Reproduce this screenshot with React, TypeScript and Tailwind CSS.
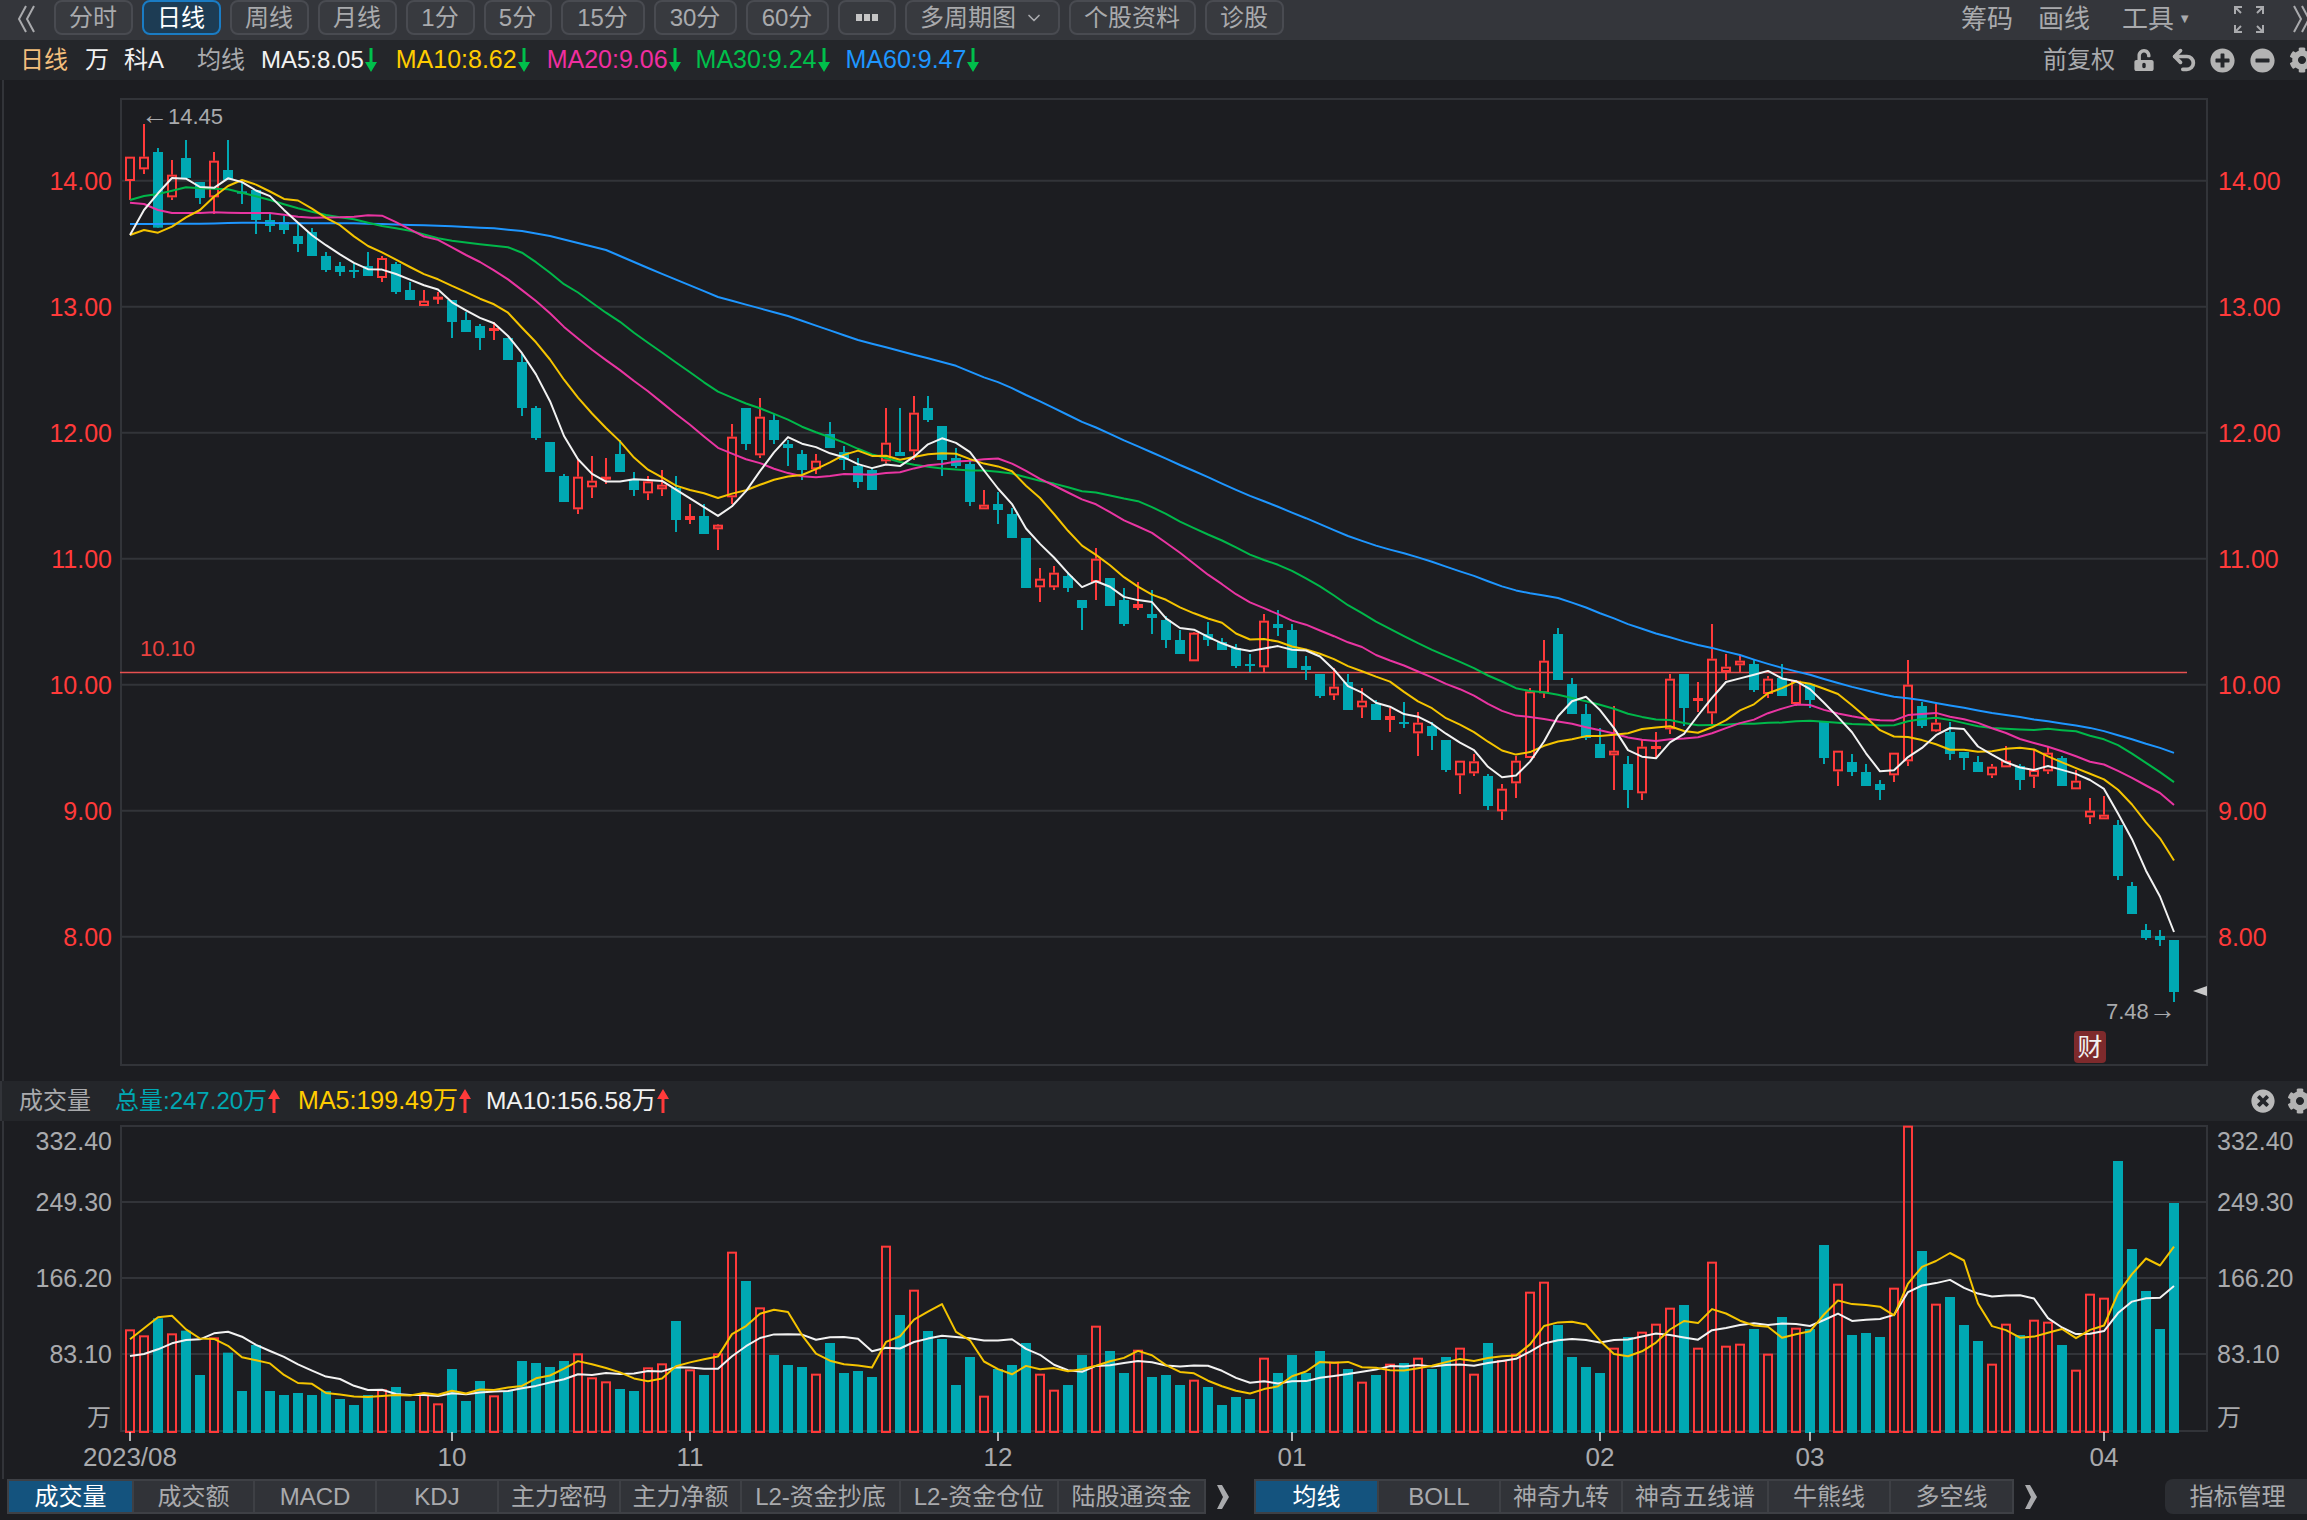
import { ChevronDown, Undo2 } from "lucide-react";
import { FaCog, FaMinusCircle, FaPlusCircle, FaTimesCircle, FaUnlockAlt } from "react-icons/fa";

const RED = "#ff3a3a";
const TEAL = "#00a8b3";
const GRID = "#323439";

type Candle = { up: boolean; wt: number; bt: number; bb: number; wb: number };

// rows are read as "r|g high bodyTop bodyBottom low", y = origin + value / 3
const seg = (origin: number, rows: string): Candle[] =>
  rows
    .trim()
    .split(/\s*;\s*/)
    .map((row) => {
      const [c, a, b, d, e] = row.split(" ");
      const y = (v: string) => origin + Number(v) / 3;
      return { up: c === "r", wt: y(a), bt: y(b), bb: y(d), wb: y(e) };
    });

const candles: Candle[] = [
  ...seg(100, `r 170 170 243 300;r 72 170 208 222;g 144 156 383 383;r 180 224 292 300;g 120 174 234 234;g 246 246 294 312;r 156 182 292 342;g 120 210 240 240;g 245 274 281 312;g 270 270 360 402;g 342 360 378 396;g 348 366 390 402;g 372 408 432 456;g 384 396 468 468;g 456 468 510 516;g 486 498 516 528;g 490 510 516 534;g 456 498 528 528;r 468 474 534 546;g 486 492 576 582;g 546 570 600 600;r 570 602 618 618;r 576 590 594 612;g 600 600 666 714;g 636 660 696 696;g 672 678 714 750;r 666 684 692 720;g 714 714 780 780;g 762 786 924 948`),
  ...seg(380, `g 78 84 174 180;g 186 186 276 276;g 282 288 366 366;r 240 290 388 402;r 228 302 322 354;r 234 290 294 312;g 180 222 276 276;g 276 300 330 348;r 288 304 340 360;r 270 314 328 348;g 288 324 420 456;r 372 408 420 432;g 372 408 462 462;r 432 434 448 510;r 132 170 352 372;g 84 84 192 210;r 54 110 226 234;g 102 120 180 192;g 180 192 204 258;g 210 222 270 300;r 222 242 268 282;g 126 162 204 204;g 198 216 240 270;g 234 258 306 324;g 264 270 330 330;r 84 188 244 250;g 84 216 228 228;r 48 98 214 240;g 48 84 120 126;g 138 138 240 288;g 204 234 258 264;g 240 252 366 378;r 330 374 388 388;g 336 372 390 432;g 384 402 474 474;g 474 474 624 624;r 564 596 622 666;r 558 578 622 630;g 576 588 624 636;g 660 660 684 750`),
  ...seg(520, `r 84 116 186 240;g 174 174 258 258;g 204 240 312 318;r 186 252 264 270;g 210 282 294 342;g 288 300 360 384;g 330 360 402 402;r 336 338 424 424;g 306 342 360 378;g 354 366 390 390;g 372 384 438 444;g 402 432 438 456;r 282 302 442 456;g 270 312 324 348;g 312 330 444 444;g 408 438 450 480;g 462 462 528 534;r 444 500 526 540;g 462 486 570 570;r 504 542 562 594;g 540 552 600 600;r 564 588 600 636;g 546 606 612 624;r 576 608 640 708;g 606 618 648 690;g 660 660 750 756;r 722 722 766 822;r 702 724 760 768;g 762 768 858 870;r 792 806 874 900;r 708 722 790 834;r 504 514 714 714;r 360 422 520 534;g 324 342 480 480;g 474 492 582 582;g 552 582 654 660`),
  ...seg(610, `g 354 402 444 444;r 288 422 436 540;g 438 462 540 594;r 390 410 550 570;r 366 408 412 444;r 192 206 358 372;g 192 192 294 348;r 216 264 270 306;r 42 146 310 342;r 132 170 186 210;r 138 152 166 186;g 150 162 240 246;r 198 206 252 264;g 162 204 258 258;r 210 212 282 288;g 222 222 270 294;g 336 336 444 462;r 422 422 484 528;g 432 456 486 498;g 462 486 528 528;g 510 522 540 570;r 428 428 496 516;r 150 224 454 468;g 276 288 348 354;r 282 338 364 366;g 336 366 432 450;g 426 426 444 480;g 438 456 486 486;r 462 470 496 504;r 408 452 472 472;g 462 468 510 540;r 420 480 500 534;r 408 428 484 492;g 438 444 528 528;r 480 512 538 538;r 564 602 622 642;r 558 614 628 628`),
  { up: false, wt: 820, bt: 825, bb: 876, wb: 880 },
  ...seg(850, `g 96 108 192 192;g 222 240 264 270;g 240 258 270 288;g 270 270 426 456`),
];

// bar tops, y = 1120 + value / 3
const volumes = [
  628, 646, 595, 640, 632, 765, 652, 698, 813, 675, 813, 825, 819, 825, 813, 837, 855, 825, 808, 801, 843, 820, 850, 747, 843,
  783, 826, 813, 723, 729, 741, 723, 700, 772, 784, 807, 813, 742, 730, 603, 748, 765, 700, 395, 483, 562, 705, 735, 741, 761,
  669, 759, 753, 771, 377, 585, 509, 633, 657, 795, 711, 827, 747, 735, 669, 761, 809, 795, 705, 617, 693, 759, 689, 771, 765,
  795, 779, 801, 855, 831, 837, 713, 759, 705, 759, 693, 725, 747, 785, 765, 731, 729, 713, 747, 711, 683, 761, 669, 720, 701,
  515, 485, 615, 711, 741, 759, 683, 651, 635, 611, 563, 555, 683, 425, 677, 671, 627, 701, 591, 623, 627, 375, 491, 645, 639,
  651, 503, 17, 393, 551, 531, 615, 663, 731, 611, 645, 599, 605, 675, 749, 521, 533, 123, 387, 513, 627, 249,
].map((v) => 1120 + v / 3);

const cx = (i: number) => 130 + 14 * i;
const closes = candles.map((c) => (c.up ? c.bt : c.bb));

// the first n-1 points have no full window, they come from seed points [index, y]
function sma(values: number[], n: number, seed: [number, number][]) {
  return values.map((_, i) => {
    if (i >= n - 1) {
      let sum = 0;
      for (let k = i - n + 1; k <= i; k++) sum += values[k];
      return sum / n;
    }
    const next = seed.findIndex(([x]) => x >= i);
    if (next <= 0) return seed[0][1];
    const [x0, y0] = seed[next - 1];
    const [x1, y1] = seed[next];
    return y0 + ((y1 - y0) * (i - x0)) / (x1 - x0);
  });
}

const seq = (base: number, vals: number[]): [number, number][] => vals.map((v, i) => [i, base + v / 3]);
const pts = (ys: number[]) => ys.map((y, i) => `${cx(i)},${y.toFixed(1)}`).join(" ");

const priceLines = [
  { color: "#1e96ff", ys: sma(closes, 60, [[0, 224], [5, 223.7], [8, 222.7], [12, 223.3], [16, 223.3], [22, 225.7], [26, 228.3], [28, 231], [30, 236], [34, 250], [37, 268], [42, 297], [47, 316], [52, 340], [58, 362]]) },
  { color: "#00b84a", ys: sma(closes, 30, [[0, 200], [1, 196], [2, 194], [3, 190.7], [4, 187.3], [5, 188.3], [7, 189.3], [8, 192.7], [10, 200], [12, 208.3], [14, 215], [16, 219.3], [18, 226], [20, 230.7], [22, 238.3], [23, 240.7], [25, 244.3], [27, 247.3], [28, 252.7]]) },
  { color: "#e935a2", ys: sma(closes, 20, [[0, 202.7], [1, 204], [2, 210], [3, 213], [5, 213], [6, 212.3], [8, 213], [10, 213], [12, 216.7], [13, 217.7], [15, 217.3], [16, 216.7], [17, 215.3], [18, 215.7]]) },
  { color: "#f5c400", ys: sma(closes, 10, seq(100, [405, 390, 398, 380, 352, 330, 290, 258, 240])) },
  { color: "#f2f2f2", ys: sma(closes, 5, seq(100, [405, 330, 280, 234])) },
];

const volumeLines = [
  { color: "#f2f2f2", ys: sma(volumes, 10, seq(1120, [708, 702, 688, 670, 660, 658, 640, 635, 650])) },
  { color: "#f5c400", ys: sma(volumes, 5, seq(1120, [658, 625, 592, 587])) },
];

const priceLabels = ["14.00", "13.00", "12.00", "11.00", "10.00", "9.00", "8.00"];
const volumeLabels = [
  { text: "332.40", y: 1141 },
  { text: "249.30", y: 1202 },
  { text: "166.20", y: 1278 },
  { text: "83.10", y: 1354 },
];
const months = [
  { text: "2023/08", x: 130 },
  { text: "10", x: 452 },
  { text: "11", x: 690 },
  { text: "12", x: 998 },
  { text: "01", x: 1292 },
  { text: "02", x: 1600 },
  { text: "03", x: 1810 },
  { text: "04", x: 2104 },
];

const toolbar = [
  { label: "分时", w: "w-[79px]" },
  { label: "日线", w: "w-[79px]", active: true },
  { label: "周线", w: "w-[79px]" },
  { label: "月线", w: "w-[79px]" },
  { label: "1分", w: "w-[69px]" },
  { label: "5分", w: "w-[68px]" },
  { label: "15分", w: "w-[84px]" },
  { label: "30分", w: "w-[83px]" },
  { label: "60分", w: "w-[83px]" },
];

const leftTabs = [
  { label: "成交量", w: "w-[123px]", active: true },
  { label: "成交额", w: "w-[119px]" },
  { label: "MACD", w: "w-[120px]" },
  { label: "KDJ", w: "w-[120px]" },
  { label: "主力密码", w: "w-[120px]" },
  { label: "主力净额", w: "w-[119px]" },
  { label: "L2-资金抄底", w: "w-[157px]" },
  { label: "L2-资金仓位", w: "w-[156px]" },
  { label: "陆股通资金", w: "w-[145px]" },
];

const rightTabs = [
  { label: "均线", w: "w-[121px]", active: true },
  { label: "BOLL", w: "w-[120px]" },
  { label: "神奇九转", w: "w-[120px]" },
  { label: "神奇五线谱", w: "w-[144px]" },
  { label: "牛熊线", w: "w-[120px]" },
  { label: "多空线", w: "w-[121px]" },
];

const maLegend = [
  { text: "MA5:8.05", color: "text-[#f2f2f2]", cls: "ml-[16px] text-[24px]" },
  { text: "MA10:8.62", color: "text-[#ffcc00]", cls: "ml-[18px] text-[25px]" },
  { text: "MA20:9.06", color: "text-[#f02ea0]", cls: "ml-[16px] text-[25px]" },
  { text: "MA30:9.24", color: "text-[#00c04b]", cls: "ml-[14px] text-[25px]" },
  { text: "MA60:9.47", color: "text-[#1e96ff]", cls: "ml-[15px] text-[25px]" },
];

function Arrow({ down, color }: { down?: boolean; color: string }) {
  return (
    <svg width="14" height="24" viewBox="0 0 14 24" className="shrink-0">
      <path d={down ? "M5.5 0h3v14H13L7 24 1 14h4.5z" : "M5.5 24h3V10H13L7 0 1 10h4.5z"} fill={color} />
    </svg>
  );
}

function Chevrons({ left }: { left?: boolean }) {
  const d = left ? "M10 2 3 15l7 13M18 2l-7 13 7 13" : "M2 2l7 13-7 13M10 2l7 13-7 13";
  return (
    <svg width="20" height="30" viewBox="0 0 20 30" fill="none" stroke="#a9aaad" strokeWidth="2">
      <path d={d} />
    </svg>
  );
}

function NextArrow() {
  return (
    <svg width="16" height="26" viewBox="0 0 16 26" className="shrink-0">
      <path d="M2 1h5l7 12-7 12H2l6-12z" fill="#a9aaad" />
    </svg>
  );
}

function Fullscreen() {
  return (
    <svg width="30" height="27" viewBox="0 0 30 27" fill="none" stroke="#a9aaad" strokeWidth="2">
      <path d="M1 8V1h7M1 1l6 6M29 8V1h-7M29 1l-6 6M1 19v7h7M1 26l6-6M29 19v7h-7M29 26l-6-6" />
    </svg>
  );
}

function Toolbar() {
  return (
    <div className="flex h-10 shrink-0 items-start bg-[#34363b] pl-[16px] text-[24px] text-[#a9aaad]">
      <div className="mr-[17.5px] mt-[4px]">
        <Chevrons left />
      </div>
      <div className="flex gap-[9px]">
        {toolbar.map((b) => (
          <div
            key={b.label}
            className={`flex h-[35px] ${b.w} items-center justify-center rounded-lg border-2 pt-[1px] ${
              b.active ? "border-[#1a7cc4] bg-[#1d3c54] text-white" : "border-[#494b51] bg-[#383a3f]"
            }`}
          >
            {b.label}
          </div>
        ))}
        <div className="flex h-[35px] w-[58px] items-center justify-center gap-[2px] rounded-lg border-2 border-[#494b51] bg-[#383a3f]">
          <span className="h-[7px] w-[6px] bg-[#c4c4c4]" />
          <span className="h-[7px] w-[6px] bg-[#c4c4c4]" />
          <span className="h-[7px] w-[6px] bg-[#c4c4c4]" />
        </div>
        <div className="flex h-[35px] w-[155px] items-center justify-center gap-[8px] rounded-lg border-2 border-[#494b51] bg-[#383a3f] pt-[1px]">
          多周期图
          <ChevronDown size={20} strokeWidth={2} />
        </div>
        <div className="flex h-[35px] w-[127px] items-center justify-center rounded-lg border-2 border-[#494b51] bg-[#383a3f] pt-[1px]">
          个股资料
        </div>
        <div className="flex h-[35px] w-[79px] items-center justify-center rounded-lg border-2 border-[#494b51] bg-[#383a3f] pt-[1px]">
          诊股
        </div>
      </div>
      <div className="ml-auto flex h-[38px] items-center text-[26px]">
        <span>筹码</span>
        <span className="ml-[25px]">画线</span>
        <span className="ml-[32px]">工具</span>
        <span className="ml-[4px] text-[13px]">▼</span>
        <div className="ml-[43px]">
          <Fullscreen />
        </div>
        <div className="ml-[28px] w-[15px] overflow-hidden">
          <Chevrons />
        </div>
      </div>
    </div>
  );
}

function LegendRow() {
  return (
    <div className="flex h-10 shrink-0 items-center overflow-hidden bg-[#24262a] pl-[20px] text-[24px]">
      <span className="text-[#f3be7c]">日线</span>
      <span className="ml-[17px] text-[#f2f2f2]">万</span>
      <span className="ml-[15px] text-[#f2f2f2]">科A</span>
      <span className="ml-[33px] text-[#a9aaad]">均线</span>
      {maLegend.map((m) => (
        <div key={m.text} className={`flex items-center ${m.cls} ${m.color}`}>
          {m.text}
          <Arrow down color="#00c04b" />
        </div>
      ))}
      <div className="ml-auto flex w-[264px] shrink-0 items-center text-[#a9aaad]">
        <span className="w-[73px] whitespace-nowrap">前复权</span>
        <FaUnlockAlt size={22} className="ml-[18px] shrink-0 text-[#b3b3b3]" />
        <Undo2 size={28} strokeWidth={3.2} className="ml-[15px] shrink-0 text-[#b3b3b3]" />
        <FaPlusCircle size={25} className="ml-[12px] shrink-0 text-[#b3b3b3]" />
        <FaMinusCircle size={25} className="ml-[15px] shrink-0 text-[#b3b3b3]" />
        <FaCog size={26} className="ml-[14px] shrink-0 text-[#b3b3b3]" />
      </div>
    </div>
  );
}

function CandleMark({ c, i }: { c: Candle; i: number }) {
  const x = cx(i);
  if (!c.up) {
    return (
      <g fill={TEAL}>
        <rect x={x - 1} y={c.wt} width="2" height={c.wb - c.wt} />
        <rect x={x - 5} y={c.bt} width="10" height={Math.max(c.bb - c.bt, 2)} />
      </g>
    );
  }
  return (
    <g>
      <rect x={x - 1} y={c.wt} width="2" height={c.bt - c.wt} fill={RED} />
      <rect x={x - 1} y={c.bb} width="2" height={c.wb - c.bb} fill={RED} />
      {c.bb - c.bt <= 3 ? (
        <rect x={x - 5} y={c.bt} width="10" height={3} fill={RED} />
      ) : (
        <rect x={x - 4} y={c.bt + 1} width="8" height={c.bb - c.bt - 2} fill="none" stroke={RED} strokeWidth="2" />
      )}
    </g>
  );
}

function PriceChart() {
  return (
    <svg width="2307" height="1001" viewBox="0 80 2307 1001" className="block shrink-0">
      <rect x="2" y="80" width="2" height="1001" fill={GRID} />
      <path d="M120 99H2208M121 98V1065M2207 98V1065M120 1065H2208" stroke={GRID} strokeWidth="2" fill="none" />
      {priceLabels.map((t, i) => {
        const y = 180.7 + 126 * i;
        return (
          <g key={t} fontSize="25" fill={RED}>
            <line x1="120" x2="2208" y1={y} y2={y} stroke={GRID} strokeWidth="2" />
            <text x="112" y={y + 9} textAnchor="end">{t}</text>
            <text x="2218" y={y + 9}>{t}</text>
          </g>
        );
      })}
      <line x1="120" x2="2187" y1="672.5" y2="672.5" stroke="#e65050" strokeWidth="1.5" />
      <text x="140" y="656" fontSize="22" fill="#e8413f">10.10</text>
      {candles.map((c, i) => (
        <CandleMark key={i} c={c} i={i} />
      ))}
      {priceLines.map((l) => (
        <polyline key={l.color} points={pts(l.ys)} fill="none" stroke={l.color} strokeWidth="2" strokeLinejoin="round" />
      ))}
      <text x="141" y="124" fontSize="22" fill="#a9aaad">
        <tspan fontSize="27">←</tspan>14.45
      </text>
      <text x="2106" y="1019" fontSize="22" fill="#a9aaad">
        7.48<tspan fontSize="27">→</tspan>
      </text>
      <polygon points="2193,991 2207,986 2207,996" fill="#c8c8c8" />
      <rect x="2074" y="1031" width="32" height="32" rx="4" fill="#7e2a2c" />
      <text x="2090" y="1056" fontSize="25" fill="#f2f2f2" textAnchor="middle">财</text>
    </svg>
  );
}

function VolumeHeader() {
  return (
    <div className="relative flex h-10 shrink-0 items-center overflow-hidden border-l-2 border-[#323439] bg-[#24262a] pl-[17px] text-[24px]">
      <span className="text-[#a9aaad]">成交量</span>
      <span className="ml-[24px] text-[#00a8b3]">总量:247.20万</span>
      <Arrow color={RED} />
      <span className="ml-[17px] text-[25px] text-[#ffcc00]">MA5:199.49万</span>
      <Arrow color={RED} />
      <span className="ml-[14px] text-[24.5px] text-[#f2f2f2]">MA10:156.58万</span>
      <Arrow color={RED} />
      <FaTimesCircle size={24} className="absolute left-[2249px] top-[8px] text-[#b9b9b9]" />
      <FaCog size={26} className="absolute left-[2285px] top-[7px] text-[#b3b3b3]" />
    </div>
  );
}

function VolumeChart() {
  return (
    <svg width="2307" height="358" viewBox="0 1121 2307 358" className="block shrink-0">
      <rect x="2" y="1121" width="2" height="358" fill={GRID} />
      <path d="M120 1126H2208M121 1126V1432M2207 1126V1432" stroke={GRID} strokeWidth="2" fill="none" />
      {[1202, 1278, 1354, 1431].map((y) => (
        <line key={y} x1="120" x2="2208" y1={y} y2={y} stroke={GRID} strokeWidth="2" />
      ))}
      {volumeLabels.map((l) => (
        <g key={l.text} fontSize="25" fill="#a9aaad">
          <text x="112" y={l.y + 9} textAnchor="end">{l.text}</text>
          <text x="2217" y={l.y + 9}>{l.text}</text>
        </g>
      ))}
      <g fontSize="24" fill="#a9aaad">
        <text x="111" y="1426" textAnchor="end">万</text>
        <text x="2217" y="1426">万</text>
      </g>
      {volumes.map((top, i) =>
        candles[i].up ? (
          <rect key={i} x={cx(i) - 4} y={top + 1} width="8" height={1432 - top - 1} fill="none" stroke={RED} strokeWidth="2" />
        ) : (
          <rect key={i} x={cx(i) - 5} y={top} width="10" height={1433 - top} fill={TEAL} />
        ),
      )}
      {volumeLines.map((l) => (
        <polyline key={l.color} points={pts(l.ys)} fill="none" stroke={l.color} strokeWidth="2" strokeLinejoin="round" />
      ))}
      {months.map((m) => (
        <g key={m.text}>
          <line x1={m.x} x2={m.x} y1="1432" y2="1441" stroke="#e6e6e6" strokeWidth="1.5" />
          <text x={m.x} y="1466" fontSize="26" fill="#a9aaad" textAnchor="middle">{m.text}</text>
        </g>
      ))}
    </svg>
  );
}

function TabGroup({ tabs }: { tabs: { label: string; w: string; active?: boolean }[] }) {
  return (
    <div className="flex h-[35px] gap-[2px] bg-[#3e4045] p-[2px]">
      {tabs.map((t) => (
        <div
          key={t.label}
          className={`flex ${t.w} items-center justify-center ${t.active ? "bg-[#14537e] text-white" : "bg-[#313338]"}`}
        >
          {t.label}
        </div>
      ))}
    </div>
  );
}

function BottomTabs() {
  return (
    <div className="flex h-[41px] items-start pl-[7px] text-[24px] text-[#a9aaad]">
      <TabGroup tabs={leftTabs} />
      <div className="ml-[9px] mt-[5px] mr-[23px]">
        <NextArrow />
      </div>
      <TabGroup tabs={rightTabs} />
      <div className="ml-[9px] mt-[5px]">
        <NextArrow />
      </div>
      <div className="ml-auto flex h-[35px] w-[142px] items-center justify-center rounded-tl-lg rounded-bl-lg bg-[#2c2e33] pl-[3px]">
        指标管理
      </div>
    </div>
  );
}

export default function App() {
  return (
    <div className="flex h-[1520px] w-[2307px] flex-col overflow-hidden bg-[#1c1d21] [font-family:'Liberation_Sans','Noto_Sans_CJK_SC',sans-serif]">
      <Toolbar />
      <LegendRow />
      <PriceChart />
      <VolumeHeader />
      <VolumeChart />
      <BottomTabs />
    </div>
  );
}
